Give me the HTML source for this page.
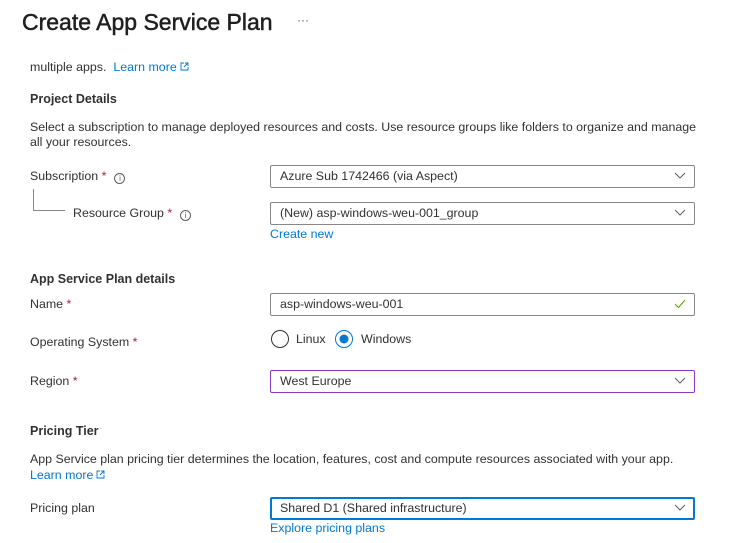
<!DOCTYPE html>
<html><head><meta charset="utf-8"><style>
*{margin:0;padding:0;box-sizing:border-box}
body{width:731px;height:543px;background:#fff;position:relative;overflow:hidden;font-family:"Liberation Sans",sans-serif;font-size:12.4px;color:#323130}
.a{position:absolute;white-space:nowrap;line-height:16px}
.h{font-weight:bold;font-size:12.5px}
.l{color:#0078d4}
.r{color:#a4262c}
.box{position:absolute;left:270px;width:425px;height:23px;border:1px solid #8a8886;border-radius:2px;padding-left:9px;line-height:21px;font-size:12.4px}
.box svg{position:absolute;right:8px;top:6px}
.i{display:inline-block;width:11px;height:11px;border:1px solid #605e5c;border-radius:50%;font-size:8px;line-height:9px;text-align:center;vertical-align:-1px;color:#605e5c;margin-left:8px}
.ext{display:inline-block;vertical-align:0px;margin-left:3px}
</style></head><body>
<div class="a" style="left:22px;top:8px;font-size:23px;line-height:28px;color:#201f1e;-webkit-text-stroke:0.5px #201f1e">Create App Service Plan</div>
<div class="a" style="left:297px;top:12px;color:#605e5c;font-size:12px">···</div>

<div class="a" style="left:30px;top:59px">multiple apps.&nbsp; <span class="l">Learn more<svg class="ext" width="9" height="9" viewBox="0 0 9 9"><path d="M4 1H1v7h7V5M5 1h3v3M8 1L4 5" fill="none" stroke="#0078d4" stroke-width=".9"/></svg></span></div>
<div class="a h" style="left:30px;top:91px">Project Details</div>
<div class="a" style="left:30px;top:119px">Select a subscription to manage deployed resources and costs. Use resource groups like folders to organize and manage</div>
<div class="a" style="left:30px;top:134px">all your resources.</div>

<div class="a" style="left:30px;top:168px">Subscription <span class="r">*</span><span class="i">i</span></div>
<div style="position:absolute;left:33px;top:189px;width:32px;height:22px;border-left:1px solid #8a8886;border-bottom:1px solid #8a8886"></div>
<div class="a" style="left:73px;top:205px">Resource Group <span class="r">*</span><span class="i">i</span></div>

<div class="box" style="top:165px">Azure Sub 1742466 (via Aspect)<svg width="12" height="8" viewBox="0 0 12 8"><path d="M1 1l5 5 5-5" fill="none" stroke="#605e5c" stroke-width="1"/></svg></div>
<div class="box" style="top:202px">(New) asp-windows-weu-001_group<svg width="12" height="8" viewBox="0 0 12 8"><path d="M1 1l5 5 5-5" fill="none" stroke="#605e5c" stroke-width="1"/></svg></div>
<div class="a l" style="left:270px;top:226px">Create new</div>

<div class="a h" style="left:30px;top:271px">App Service Plan details</div>
<div class="a" style="left:30px;top:296px">Name <span class="r">*</span></div>
<div class="box" style="top:293px">asp-windows-weu-001<svg width="12" height="10" viewBox="0 0 12 10" style="top:5px"><path d="M1 5l3.5 3.5L11 1" fill="none" stroke="#57a300" stroke-width="1"/></svg></div>

<div class="a" style="left:30px;top:334px">Operating System <span class="r">*</span></div>
<svg style="position:absolute;left:270px;top:329px" width="20" height="20"><circle cx="10" cy="10" r="8.5" fill="none" stroke="#323130" stroke-width="1"/></svg>
<div class="a" style="left:296px;top:331px">Linux</div>
<svg style="position:absolute;left:334px;top:329px" width="20" height="20"><circle cx="10" cy="10" r="8.5" fill="none" stroke="#0078d4" stroke-width="1"/><circle cx="10" cy="10" r="4.5" fill="#0078d4"/></svg>
<div class="a" style="left:361px;top:331px">Windows</div>

<div class="a" style="left:30px;top:373px">Region <span class="r">*</span></div>
<div class="box" style="top:370px;border-color:#8a3ac0">West Europe<svg width="12" height="8" viewBox="0 0 12 8"><path d="M1 1l5 5 5-5" fill="none" stroke="#605e5c" stroke-width="1"/></svg></div>

<div class="a h" style="left:30px;top:423px">Pricing Tier</div>
<div class="a" style="left:30px;top:451px">App Service plan pricing tier determines the location, features, cost and compute resources associated with your app.</div>
<div class="a l" style="left:30px;top:467px">Learn more<svg class="ext" width="9" height="9" viewBox="0 0 9 9"><path d="M4 1H1v7h7V5M5 1h3v3M8 1L4 5" fill="none" stroke="#0078d4" stroke-width=".9"/></svg></div>

<div class="a" style="left:30px;top:500px">Pricing plan</div>
<div class="box" style="top:497px;border:2px solid #0078d4;padding-left:8px;line-height:19px">Shared D1 (Shared infrastructure)<svg width="12" height="8" viewBox="0 0 12 8" style="right:7px;top:5px"><path d="M1 1l5 5 5-5" fill="none" stroke="#605e5c" stroke-width="1"/></svg></div>
<div class="a l" style="left:270px;top:520px">Explore pricing plans</div>
</body></html>
